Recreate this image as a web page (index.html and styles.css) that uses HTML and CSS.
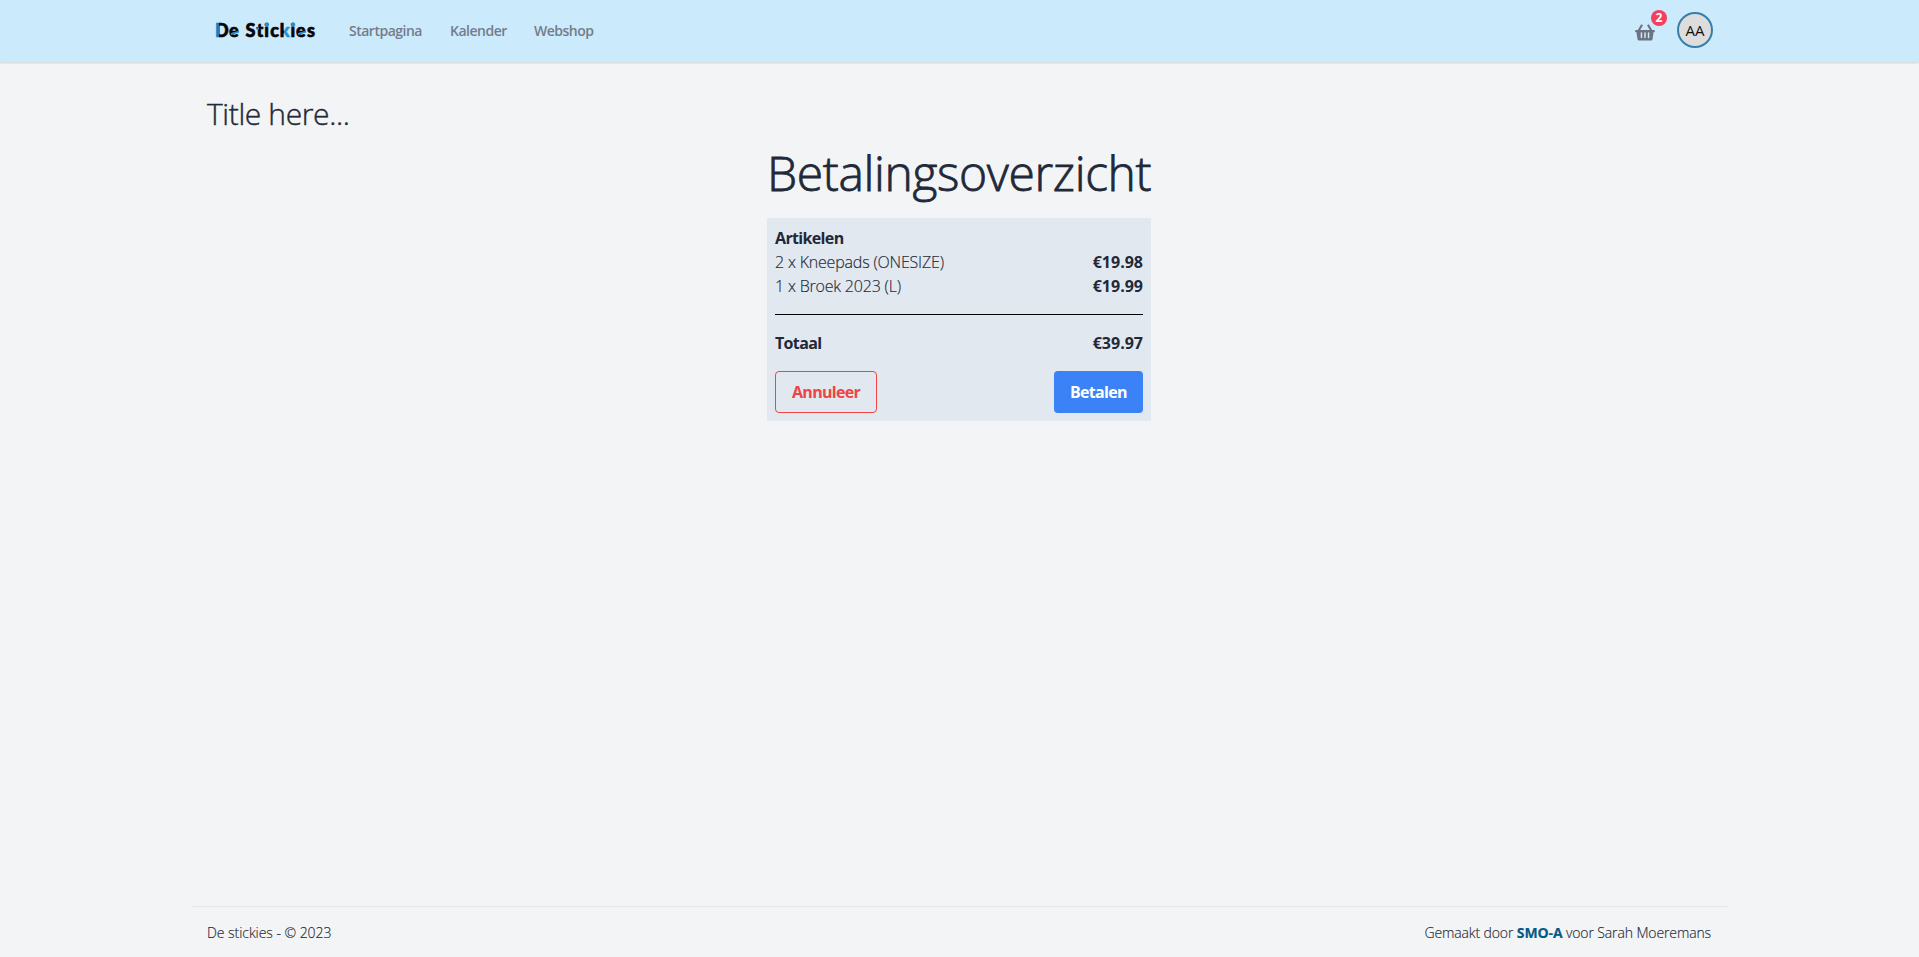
FILE: index.html
```html
<!DOCTYPE html>
<html lang="nl">
<head>
<meta charset="utf-8">
<title>De Stickies</title>
<link rel="stylesheet" href="styles.css">
</head>
<body>
<header class="topbar">
  <div class="container topbar-inner">
    <svg class="logo" width="101" height="20" viewBox="0 0 101 20">
      <defs>
        <linearGradient id="ink" gradientUnits="userSpaceOnUse" x1="0" y1="0" x2="100" y2="0">
          <stop offset="0" stop-color="#1b7ab8"/><stop offset=".033" stop-color="#1b7ab8"/>
          <stop offset=".033" stop-color="#030608"/><stop offset=".679" stop-color="#030608"/>
          <stop offset=".679" stop-color="#2492da"/><stop offset=".745" stop-color="#2492da"/>
          <stop offset=".745" stop-color="#030608"/><stop offset="1" stop-color="#030608"/>
        </linearGradient>
      </defs>
      <text fill="url(#ink)" stroke="url(#ink)" stroke-width=".6" y="15.700" x="-1 12.900 23 29.500 40.400 48.300 54.200 63.700 74.500 79.900 91">De Stickies</text>
      <path d="M15 13.200 22 10.800M82 13.200 89 10.800" stroke="#2492da" stroke-width="1.800"/>
      <path d="M40.500 6.400H43v2.200h-2.500z" fill="#2492da"/>
      <circle cx="51" cy="3.700" r="2.100" fill="#2492da"/><circle cx="77.200" cy="3.700" r="2.100" fill="#2492da"/>
    </svg>
    <nav class="nav"><a class="nav-start">Startpagina</a><a class="nav-cal">Kalender</a><a class="nav-shop">Webshop</a></nav>
    <div class="account">
      <div class="basket">
        <svg width="20" height="17" viewBox="0 0 20 17"><path fill="#6b7280" fill-rule="evenodd" d="M6.200.3 8 1.300 5.200 6H14.800L12 1.300 13.800.3 17.200 6H19a.8.8 0 0 1 .8.8v.7a.8.8 0 0 1-.8.8h-.5l-1 7a1.500 1.500 0 0 1-1.500 1.200H4a1.500 1.500 0 0 1-1.500-1.200l-1-7H1a.8.8 0 0 1-.8-.8v-.7A.8.8 0 0 1 1 6h1.800zM5.700 9v4.500a.75.75 0 0 0 1.500 0V9a.75.75 0 0 0-1.500 0zm3.550 0v4.500a.75.75 0 0 0 1.500 0V9a.75.75 0 0 0-1.500 0zm3.550 0v4.500a.75.75 0 0 0 1.500 0V9a.75.75 0 0 0-1.500 0z"/></svg>
        <span class="badge">2</span>
      </div>
      <div class="avatar"><span>AA</span></div>
    </div>
  </div>
</header>
<main class="container main">
  <h1 class="page-title">Title here...</h1>
  <section class="payment">
    <h2 class="payment-title">Betalingsoverzicht</h2>
    <div class="card">
      <div class="row"><b>Artikelen</b></div>
      <div class="row"><span>2 x Kneepads (ONESIZE)</span><b class="price">€19.98</b></div>
      <div class="row"><span>1 x Broek 2023 (L)</span><b class="price">€19.99</b></div>
      <hr class="rule">
      <div class="row"><b>Totaal</b><b class="price">€39.97</b></div>
      <div class="actions"><button class="btn cancel">Annuleer</button><button class="btn pay">Betalen</button></div>
    </div>
  </section>
</main>
<footer class="container footer">
  <span>De stickies - © 2023</span>
  <span class="credit">Gemaakt door <b>SMO-A</b> voor Sarah Moeremans</span>
</footer>
</body>
</html>
```
FILE: styles.css
```css
* { box-sizing: border-box; }
body {
  margin: 0; height: 957px; display: flex; flex-direction: column;
  background: #f3f4f6; color: #1f2937;
  font: 300 16px/24px "Open Sans", "Noto Sans", sans-serif;
}
h1, h2 { margin: 0; font-weight: 300; }
b { font-weight: 700; }
.container { width: 1537px; margin: 0 auto; padding: 0 17px 0 16px; }
.topbar { background: #cbeafc; height: 62px; box-shadow: 0 1px 2px rgba(0,0,0,.15); }
.topbar-inner { height: 62px; display: flex; align-items: center; }
.logo { margin-left: 9px; overflow: visible; font: 900 18px Lato, sans-serif; }
.nav { display: flex; margin-left: 32px; font-size: 14px; font-weight: 600; line-height: 20px; color: #737c8b; letter-spacing: -.5px; }
.nav-start { width: 101px; }
.nav-cal { width: 84px; }
.account { display: flex; align-items: center; margin: 0 -2px 0 auto; gap: 22px; }
.basket { position: relative; height: 17px; width: 20px; margin-top: 2px; }
.basket svg { display: block; }
.badge {
  position: absolute; left: 16px; top: -14px; width: 16px; height: 16px; border-radius: 50%;
  background: #f43f5e; color: #fff; font-size: 12px; line-height: 16px; font-weight: 700; text-align: center;
}
.avatar {
  width: 36px; height: 36px; border-radius: 50%; border: 2px solid #377fa8; background: #ddd; color: #111;
  font: 400 15px/32px "Open Sans", sans-serif; text-align: center; margin-bottom: 2px;
}
.main { flex: 1; }
.page-title { margin-top: 34px; font-size: 30px; line-height: 36px; letter-spacing: -.38px; -webkit-text-stroke: .4px; }
.payment { width: 384px; margin: 17px auto 0; }
.payment-title { font-size: 48px; line-height: 48px; height: 69px; white-space: nowrap; letter-spacing: -.36px; -webkit-text-stroke: .8px; }
.card { background: #e2e8f0; padding: 8px; }
.row { display: flex; justify-content: space-between; height: 24px; letter-spacing: -.19px; }
.row span, .footer { -webkit-text-stroke: .15px; }
.row b { letter-spacing: -.65px; }
.row .price { letter-spacing: 0; }
.rule { border: 0; height: 1px; background: #000; margin: 16px 0; }
.actions { display: flex; justify-content: space-between; margin-top: 16px; }
.btn { height: 42px; padding: 0 16px; border-radius: 4px; font: 700 16px/24px "Open Sans", sans-serif; letter-spacing: -.7px; text-align: left; }
.cancel { width: 102px; border: 1px solid #ef4444; background: transparent; color: #ef4444; }
.pay { width: 89px; border: 0; background: #3b82f6; color: #fff; padding-bottom: 1px; }
.footer { height: 51px; border-top: 1px solid #e5e7eb; display: flex; justify-content: space-between; padding-top: 16px; font-size: 14px; line-height: 20px; letter-spacing: -.05px; }
.credit { letter-spacing: -.12px; }
.footer b { color: #075985; }
```
